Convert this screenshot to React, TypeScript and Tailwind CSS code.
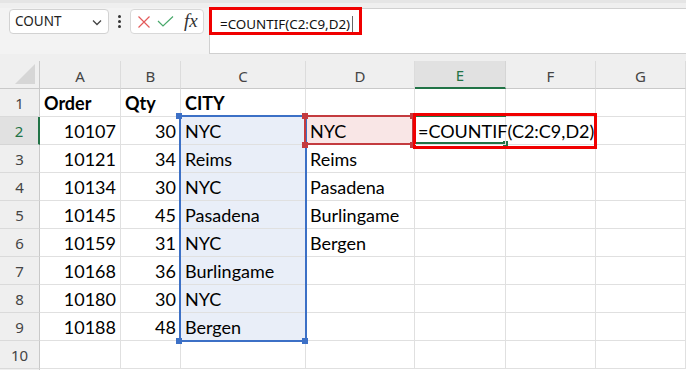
import React from "react";

const COLS = ["A", "B", "C", "D", "E", "F", "G", ""];

type Cell = { t?: string; r?: boolean; b?: boolean };

const data: Cell[][] = [
  [{ t: "Order", b: true }, { t: "Qty", b: true }, { t: "CITY", b: true }, {}, {}, {}, {}, {}],
  [{ t: "10107", r: true }, { t: "30", r: true }, { t: "NYC" }, { t: "NYC" }, {}, {}, {}, {}],
  [{ t: "10121", r: true }, { t: "34", r: true }, { t: "Reims" }, { t: "Reims" }, {}, {}, {}, {}],
  [{ t: "10134", r: true }, { t: "30", r: true }, { t: "NYC" }, { t: "Pasadena" }, {}, {}, {}, {}],
  [{ t: "10145", r: true }, { t: "45", r: true }, { t: "Pasadena" }, { t: "Burlingame" }, {}, {}, {}, {}],
  [{ t: "10159", r: true }, { t: "31", r: true }, { t: "NYC" }, { t: "Bergen" }, {}, {}, {}, {}],
  [{ t: "10168", r: true }, { t: "36", r: true }, { t: "Burlingame" }, {}, {}, {}, {}, {}],
  [{ t: "10180", r: true }, { t: "30", r: true }, { t: "NYC" }, {}, {}, {}, {}, {}],
  [{ t: "10188", r: true }, { t: "48", r: true }, { t: "Bergen" }, {}, {}, {}, {}, {}],
  [{}, {}, {}, {}, {}, {}, {}, {}],
];

const gridCols = "grid grid-cols-[40px_81px_60px_125px_109px_91px_90px_90px_40px]";

function Sq({ cls }: { cls: string }) {
  return <div className={"absolute w-[6px] h-[6px] " + cls} />;
}

export default function App() {
  return (
    <div className="relative w-[686px] h-[370px] overflow-hidden bg-[#f3f3f3] font-['Noto_Sans',sans-serif]">
      {/* top strip */}
      <div className="h-[3px] bg-[#e5e5e5]" />
      <div className="h-[5px] bg-[#efefef]" />
      {/* formula bar row */}
      <div className="flex h-[46px]">
        <div className="ml-[9px] mt-[1px] w-[100px] h-[25px] rounded-[4px] border border-[#d2d2d2] bg-white flex items-center pl-[5px] pr-[4px]">
          <span className="text-[13.5px] text-[#222] leading-none flex-1">COUNT</span>
          <svg width="12" height="12" viewBox="0 0 12 12" className="mr-[1px]">
            <path d="M2 4.5 L6 8.5 L10 4.5" stroke="#444" strokeWidth="1.3" fill="none" />
          </svg>
        </div>
        <div className="w-[21px] flex flex-col items-center justify-center gap-[2px] h-[25px] mt-[1px]">
          <div className="w-[3px] h-[3px] bg-[#333] rounded-full" />
          <div className="w-[3px] h-[3px] bg-[#333] rounded-full" />
          <div className="w-[3px] h-[3px] bg-[#333] rounded-full" />
        </div>
        <div className="w-[74px] h-[25px] mt-[1px] rounded-[4px] border border-[#d8d8d8] bg-white flex items-center pl-[6px]">
          <svg width="14" height="14" viewBox="0 0 14 14">
            <path d="M1.5 1.5 L12.5 12.5 M12.5 1.5 L1.5 12.5" stroke="#e35a5a" strokeWidth="1.2" fill="none" />
          </svg>
          <svg width="17" height="13" viewBox="0 0 17 13" className="ml-[6px]">
            <path d="M1 6 L6 11 L16 1.5" stroke="#48a86a" strokeWidth="1.2" fill="none" />
          </svg>
          <span className="ml-[10px] text-[19px] italic leading-none text-[#333] font-['Liberation_Serif',serif] -mt-[3px]">fx</span>
        </div>
        <div className="ml-[5px] flex-1 h-[46px] bg-white border-l border-t border-b border-[#d0d0d0] rounded-tl-[6px] flex items-start pl-[10px] pt-[6px]">
          <span className="text-[13.4px] text-[#111] leading-[18px]">=COUNTIF(C2:C9,D2)</span>
          <div className="ml-[2px] mt-[1px] w-px h-[16px] bg-[#666]" />
        </div>
      </div>
      {/* header gap */}
      <div className="h-[7px] bg-[#efefef]" />
      {/* column headers */}
      <div className={gridCols + " h-[28px] bg-[#efefef]"}>
        <div className="relative border-r border-b border-[#c9c9c9]">
          <svg width="22" height="22" viewBox="0 0 22 22" className="absolute right-[3px] bottom-[3px]">
            <polygon points="21,1 21,21 1,21" fill="#d6d6d6" />
          </svg>
        </div>
        {COLS.map((c, i) =>
          c === "E" ? (
            <div key={i} className="bg-[#e1e1e1] border-r border-[#d5d5d5] border-b-2 border-b-[#217346] flex items-center justify-center pt-[3px] text-[15px] text-[#217346]">
              {c}
            </div>
          ) : (
            <div key={i} className="border-r border-[#dcdcdc] border-b border-b-[#c9c9c9] flex items-center justify-center pt-[3px] text-[15px] text-[#444]">
              {c}
            </div>
          )
        )}
      </div>
      {/* rows */}
      {data.map((row, ri) => (
        <div key={ri} className={gridCols + " h-[28px] bg-white"}>
          <div
            className={
              ri === 1
                ? "bg-[#e1e1e1] border-r-2 border-r-[#217346] border-b border-b-[#d5d5d5] flex items-center justify-center pt-[2px] text-[15px] text-[#217346]"
                : "bg-[#efefef] border-r border-r-[#c9c9c9] border-b border-b-[#dadada] flex items-center justify-center pt-[2px] text-[15px] text-[#444]"
            }
          >
            {ri + 1}
          </div>
          {row.map((cell, ci) => {
            let bg = "";
            if (ci === 2 && ri >= 1 && ri <= 8) bg = " bg-[#e9eef8]";
            if (ci === 3 && ri === 1) bg = " bg-[#f9e6e6]";
            const isE2 = ci === 4 && ri === 1;
            return (
              <div
                key={ci}
                className={
                  "relative border-r border-b border-[#e0e0e0] flex items-center font-['Lato',sans-serif] text-[18px] text-black leading-none whitespace-nowrap pt-[1px]" +
                  bg +
                  (cell.r ? " justify-end pr-[4px]" : " pl-[4px]") +
                  (cell.b ? " font-bold" : "") +
                  (isE2 ? " overflow-visible z-10" : "")
                }
              >
                {isE2 ? <span className="absolute left-[3px] top-[5px]">=COUNTIF(C2:C9,D2)</span> : cell.t}
              </div>
            );
          })}
        </div>
      ))}
      <div className={gridCols + " h-[28px] bg-white"}>
        <div className="bg-[#efefef] border-r border-r-[#c9c9c9]" />
      </div>

      {/* C2:C9 selection border */}
      <div className="absolute left-[179px] top-[115px] w-[128px] h-[227px] border-2 border-[#3c70c6]" />
      <Sq cls="left-[176px] top-[113px] bg-[#3c70c6]" />
      <Sq cls="left-[302px] top-[338px] bg-[#3c70c6]" />
      <Sq cls="left-[176px] top-[338px] bg-[#3c70c6]" />
      {/* D2 reference border */}
      <div className="absolute left-[304px] top-[115px] w-[110px] h-[30px] border-2 border-[#c43b3f]" />
      <Sq cls="left-[302px] top-[113px] bg-[#c43b3f]" />
      <Sq cls="left-[410px] top-[113px] bg-[#c43b3f]" />
      <Sq cls="left-[302px] top-[142px] bg-[#c43b3f]" />
      <Sq cls="left-[410px] top-[142px] bg-[#c43b3f]" />
      {/* active cell E2 */}
      <div className="absolute left-[415px] top-[115px] w-[91px] h-[2px] bg-[#217346]" />
      <div className="absolute left-[415px] top-[142px] w-[91px] h-[2px] bg-[#217346]" />
      <div className="absolute left-[503px] top-[141px] w-[5px] h-[5px] bg-[#217346]" />
      {/* red annotation boxes */}
      <div className="absolute left-[209px] top-[7px] w-[153px] h-[28px] border-[3px] border-[#f00000]" />
      <div className="absolute left-[413px] top-[113px] w-[184px] h-[36px] border-[3px] border-[#f00000]" />
    </div>
  );
}
